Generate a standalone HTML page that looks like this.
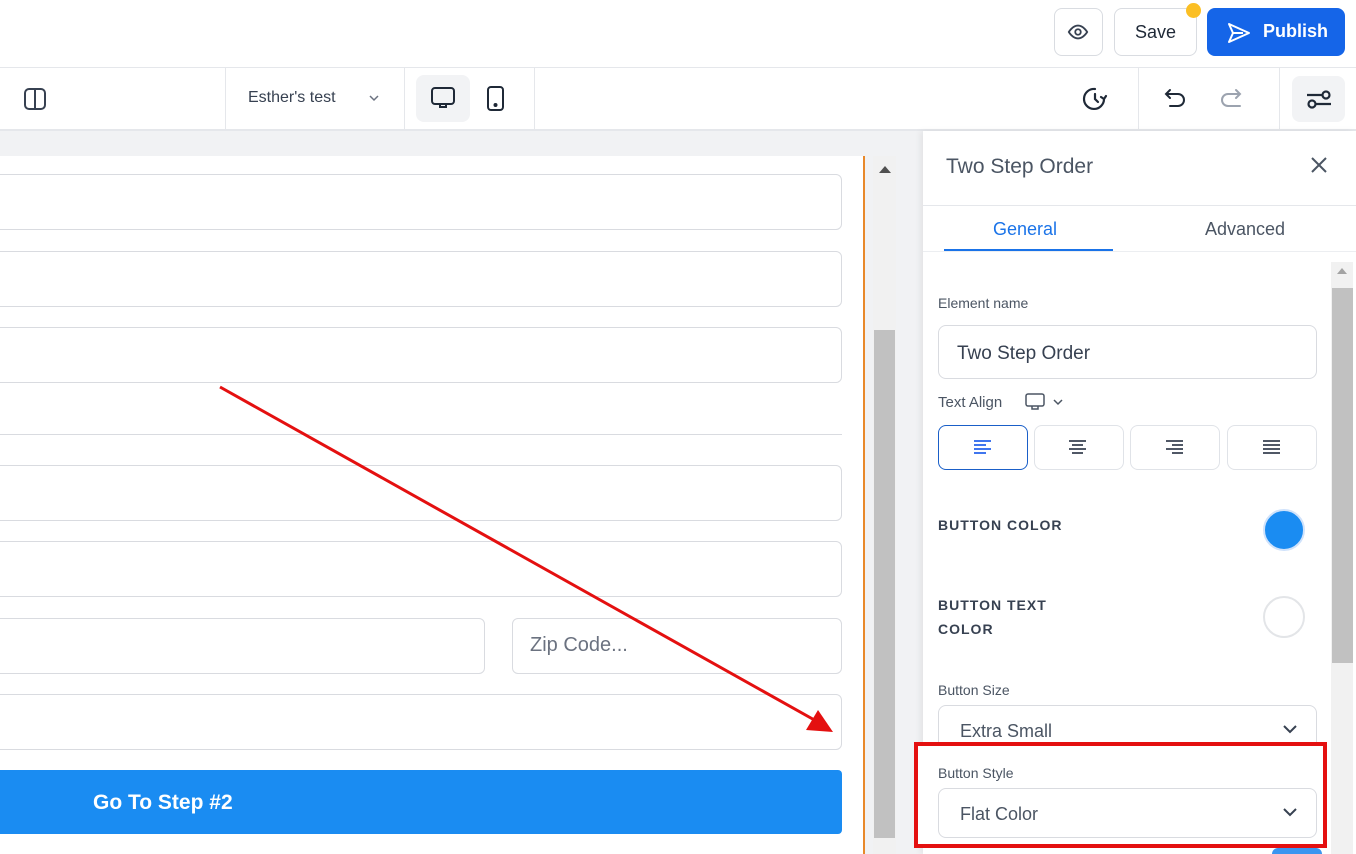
<!DOCTYPE html>
<html><head><meta charset="utf-8"><style>
*{box-sizing:border-box;margin:0;padding:0}
html,body{width:1356px;height:854px;overflow:hidden}
body{background:#fff;font-family:"Liberation Sans",sans-serif;position:relative;color:#1f2937}
.a{position:absolute}
.inp{position:absolute;border:1px solid #d9dbe0;border-radius:6px;background:#fff}
.btn4{position:absolute;top:425px;width:90px;height:45px;border:1px solid #e0e3e8;border-radius:8px;background:#fff}
.lbl{position:absolute;left:938px;font-size:14px;color:#4b5563}
.cap{position:absolute;left:938px;font-size:14px;font-weight:bold;letter-spacing:1px;color:#374151}
</style></head><body>
<div class="a" style="left:0;top:67px;width:1356px;height:1px;background:#e5e7eb"></div>
<div class="a" style="left:1054px;top:8px;width:49px;height:48px;border:1px solid #d9dce1;border-radius:8px"></div>
<svg class="a" style="left:1067px;top:21px" width="22" height="22" viewBox="0 0 24 24" fill="none" stroke="#374151" stroke-width="2"><path d="M2 12s4-7 10-7 10 7 10 7-4 7-10 7S2 12 2 12z"/><circle cx="12" cy="12" r="3"/></svg>
<div class="a" style="left:1114px;top:8px;width:83px;height:48px;border:1px solid #d9dce1;border-radius:8px;font-size:18px;line-height:46px;text-align:center;color:#1f2937">Save</div>
<div class="a" style="left:1186px;top:3px;width:15px;height:15px;border-radius:50%;background:#fbbf24"></div>
<div class="a" style="left:1207px;top:8px;width:138px;height:48px;border-radius:8px;background:#1565e8;color:#fff;font-size:18px;font-weight:bold;line-height:46px;padding-left:56px">Publish</div>
<svg class="a" style="left:1226px;top:21px" width="26" height="24" viewBox="0 0 26 24" fill="none" stroke="#fff" stroke-width="2" stroke-linejoin="round"><path d="M3 3l20 9-20 9 4-9z M7 12h10"/></svg>
<div class="a" style="left:0;top:129px;width:1356px;height:2px;background:#e5e7eb"></div>
<svg class="a" style="left:23px;top:87px" width="24" height="24" viewBox="0 0 24 24" fill="none" stroke="#374151" stroke-width="2"><rect x="2" y="2" width="20" height="20" rx="4"/><path d="M12 2v20"/></svg>
<div class="a" style="left:225px;top:68px;width:1px;height:61px;background:#e5e7eb"></div>
<div class="a" style="left:248px;top:89px;font-size:16px;color:#374151">Esther's test</div>
<svg class="a" style="left:368px;top:92px" width="12" height="12" viewBox="0 0 12 12" fill="none" stroke="#6b7280" stroke-width="1.5"><path d="M2 4l4 4 4-4"/></svg>
<div class="a" style="left:404px;top:68px;width:1px;height:61px;background:#e5e7eb"></div>
<div class="a" style="left:416px;top:75px;width:54px;height:47px;border-radius:8px;background:#f2f3f5"></div>
<svg class="a" style="left:430px;top:86px" width="26" height="26" viewBox="0 0 26 26" fill="none" stroke="#1f2937" stroke-width="2"><rect x="2" y="2" width="22" height="16" rx="3"/><path d="M10 18v3h6v-3"/></svg>
<svg class="a" style="left:485px;top:85px" width="22" height="28" viewBox="0 0 22 28" fill="none" stroke="#1f2937" stroke-width="2"><rect x="3" y="2" width="15" height="23" rx="3"/><circle cx="10.5" cy="20" r="1" fill="#1f2937"/></svg>
<div class="a" style="left:534px;top:68px;width:1px;height:61px;background:#e5e7eb"></div>
<svg class="a" style="left:1082px;top:86px" width="26" height="26" viewBox="0 0 26 26" fill="none" stroke="#1f2937" stroke-width="2.2" stroke-linecap="round"><path d="M22 13A10 10 0 1 1 13 3"/><path d="M13 8v5l3 3"/><path d="M22 13l2-3M22 13l-3-2"/></svg>
<div class="a" style="left:1138px;top:68px;width:1px;height:61px;background:#e5e7eb"></div>
<svg class="a" style="left:1163px;top:86px" width="26" height="26" viewBox="0 0 26 26" fill="none" stroke="#1f2937" stroke-width="2" stroke-linecap="round"><path d="M7 4L3 8l4 4M3 8h12a6 6 0 0 1 0 12H7"/></svg>
<svg class="a" style="left:1217px;top:86px" width="26" height="26" viewBox="0 0 26 26" fill="none" stroke="#9ca3af" stroke-width="2" stroke-linecap="round"><path d="M19 4l4 4-4 4M23 8H11a6 6 0 0 0 0 12h12"/></svg>
<div class="a" style="left:1279px;top:68px;width:1px;height:61px;background:#e5e7eb"></div>
<div class="a" style="left:1292px;top:76px;width:53px;height:46px;border-radius:8px;background:#f2f3f5"></div>
<svg class="a" style="left:1305px;top:86px" width="28" height="26" viewBox="0 0 28 26" fill="none" stroke="#1f2937" stroke-width="2.2"><path d="M2 9h15M11 18h15"/><circle cx="21" cy="9" r="3.5"/><circle cx="7" cy="18" r="3.5"/></svg>
<div class="a" style="left:0;top:131px;width:923px;height:723px;background:#f1f2f4"></div>
<div class="a" style="left:0;top:156px;width:863px;height:698px;background:#fff"></div>
<div class="a" style="left:863px;top:156px;width:2px;height:698px;background:#e8892b"></div>
<div class="a" style="left:873px;top:156px;width:23px;height:698px;background:#f1f1f1"></div>
<div class="a" style="left:879px;top:166px;width:0;height:0;border-left:6px solid transparent;border-right:6px solid transparent;border-bottom:7px solid #505050"></div>
<div class="a" style="left:874px;top:330px;width:21px;height:508px;background:#c1c1c1"></div>
<div class="inp" style="left:-10px;top:174px;width:852px;height:56px"></div>
<div class="inp" style="left:-10px;top:251px;width:852px;height:56px"></div>
<div class="inp" style="left:-10px;top:327px;width:852px;height:56px"></div>
<div class="a" style="left:0;top:434px;width:842px;height:1px;background:#d9dbe0"></div>
<div class="inp" style="left:-10px;top:465px;width:852px;height:56px"></div>
<div class="inp" style="left:-10px;top:541px;width:852px;height:56px"></div>
<div class="inp" style="left:-10px;top:618px;width:495px;height:56px"></div>
<div class="inp" style="left:512px;top:618px;width:330px;height:56px;font-size:20px;color:#6b7280;padding:15px 0 0 17px">Zip Code...</div>
<div class="inp" style="left:-10px;top:694px;width:852px;height:56px"></div>
<div class="a" style="left:0;top:770px;width:842px;height:64px;background:#1a8cf2;border-radius:0 4px 4px 0;color:#fff;font-size:21px;font-weight:bold;line-height:66px;padding-left:93px">Go To Step #2</div>
<svg class="a" style="left:0;top:0" width="923" height="854"><line x1="220" y1="387" x2="818" y2="722" stroke="#e41010" stroke-width="3"/><polygon points="833,732 806,730 818,710" fill="#e41010"/></svg>
<div class="a" style="left:923px;top:131px;width:433px;height:723px;background:#fff;box-shadow:-3px 0 6px rgba(0,0,0,.06)"></div>
<div class="a" style="left:946px;top:155px;font-size:21px;color:#4b5563">Two Step Order</div>
<svg class="a" style="left:1310px;top:156px" width="18" height="18" viewBox="0 0 18 18" stroke="#4b5563" stroke-width="2"><path d="M2 2l14 14M16 2L2 16"/></svg>
<div class="a" style="left:923px;top:205px;width:433px;height:1px;background:#e5e7eb"></div>
<div class="a" style="left:993px;top:219px;font-size:18px;color:#1a73e8">General</div>
<div class="a" style="left:944px;top:249px;width:169px;height:2px;background:#1a73e8"></div>
<div class="a" style="left:1205px;top:219px;font-size:18px;color:#4b5563">Advanced</div>
<div class="a" style="left:923px;top:251px;width:433px;height:1px;background:#eceef1"></div>
<div class="a" style="left:1331px;top:262px;width:22px;height:592px;background:#f1f1f1"></div>
<div class="a" style="left:1337px;top:268px;border-left:5px solid transparent;border-right:5px solid transparent;border-bottom:6px solid #a3a3a3"></div>
<div class="a" style="left:1332px;top:288px;width:21px;height:375px;background:#c1c1c1"></div>
<div class="lbl" style="top:295px">Element name</div>
<div class="inp" style="left:938px;top:325px;width:379px;height:54px;border-radius:8px;font-size:19px;color:#374151;padding:17px 0 0 18px">Two Step Order</div>
<div class="lbl" style="top:394px;font-size:15px">Text Align</div>
<svg class="a" style="left:1025px;top:392px" width="40" height="20" viewBox="0 0 40 20" fill="none" stroke="#4b5563" stroke-width="1.5"><rect x="1" y="2" width="18" height="12" rx="2"/><path d="M7 14v3h6v-3M29 8l4 4 4-4"/></svg>
<div class="btn4" style="left:938px;border:1.5px solid #1a5fc8"></div>
<div class="btn4" style="left:1034px"></div>
<div class="btn4" style="left:1130px"></div>
<div class="btn4" style="left:1227px"></div>
<svg class="a" style="left:938px;top:425px" width="380" height="45" stroke-width="1.8"><g stroke="#2563eb"><path d="M36 16h17M36 20h12M36 24h17M36 28h12"/></g><g stroke="#374151"><path d="M131 16h17M134 20h11M131 24h17M134 28h11"/><path d="M228 16h17M234 20h11M228 24h17M234 28h11"/><path d="M325 16h17M325 20h17M325 24h17M325 28h17"/></g></svg>
<div class="cap" style="top:517px">BUTTON COLOR</div>
<div class="a" style="left:1263px;top:509px;width:42px;height:42px;border-radius:50%;background:#1a8cf2;border:2px solid #cfe2fb"></div>
<div class="cap" style="top:593px;line-height:24px">BUTTON TEXT<br>COLOR</div>
<div class="a" style="left:1263px;top:596px;width:42px;height:42px;border-radius:50%;background:#fff;border:2px solid #e3e5e8"></div>
<div class="lbl" style="top:682px">Button Size</div>
<div class="inp" style="left:938px;top:705px;width:379px;height:50px;border-radius:8px;font-size:18px;color:#4b5563;padding:15px 0 0 21px">Extra Small</div>
<svg class="a" style="left:1282px;top:723px" width="16" height="12" viewBox="0 0 16 12" fill="none" stroke="#374151" stroke-width="2"><path d="M2 3l6 6 6-6"/></svg>
<div class="a" style="left:916px;top:743px;width:409px;height:104px;background:#fff"></div>
<div class="lbl" style="top:765px">Button Style</div>
<div class="inp" style="left:938px;top:788px;width:379px;height:50px;border-radius:8px;font-size:18px;color:#4b5563;padding:15px 0 0 21px">Flat Color</div>
<svg class="a" style="left:1282px;top:806px" width="16" height="12" viewBox="0 0 16 12" fill="none" stroke="#374151" stroke-width="2"><path d="M2 3l6 6 6-6"/></svg>
<div class="a" style="left:914px;top:742px;width:413px;height:106px;border:4px solid #e41010"></div>
<div class="a" style="left:1272px;top:848px;width:50px;height:6px;border-radius:25px 25px 0 0;background:#3b95f0"></div>
</body></html>
